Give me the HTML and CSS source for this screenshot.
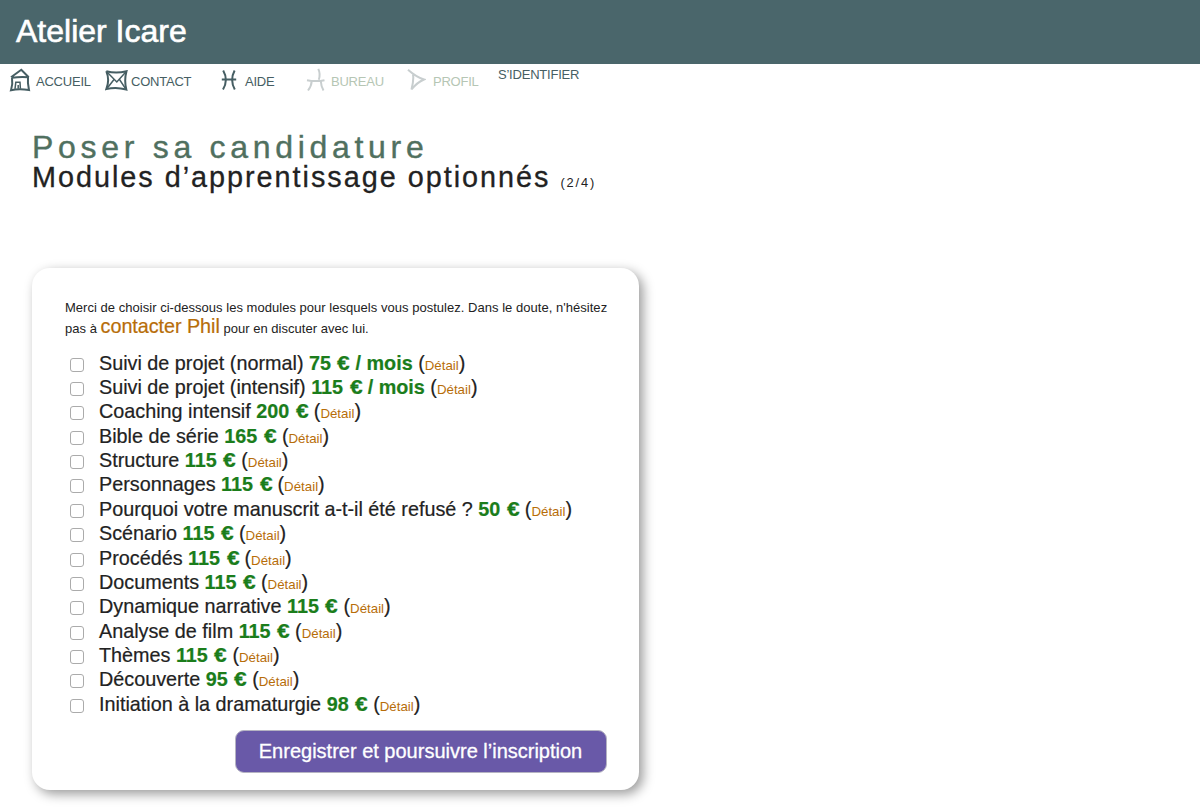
FILE: index.html
```html
<!DOCTYPE html>
<html lang="fr">
<head>
<meta charset="utf-8">
<title>Atelier Icare</title>
<link rel="stylesheet" href="styles.css">
</head>
<body>
<header class="banner">Atelier Icare</header>
<nav class="nav">
  <a class="home"><svg width="22" height="24" viewBox="0 0 22 24"><path d="M2 9.3 12.3 1.7 19.7 9.3M3 9.8Q11 8.7 19 9.3Q18.4 15 20 22Q10 20.3 2 22.2Q4 16 3 9.8"/><path class="thin" d="M6 20.8 6.8 14.3H11L11.4 20.8M9.2 17V20.8"/></svg><span>ACCUEIL</span></a>
  <a class="contact"><svg width="23" height="22" viewBox="0 0 23 22"><path d="M1.3 1.2Q11 4 21.5 1.2Q19 10 21.3 19.5Q11 16.5 1.3 19.1Q5 10 1.3 1.2"/><path class="thin" d="M2 2 11.8 12 20.8 2M2 18.5 9 9.5M20.5 18.7 14.5 9.5"/></svg><span>CONTACT</span></a>
  <a class="help"><svg width="18" height="22" viewBox="0 0 18 22"><path d="M3.2 .5Q8.6 10 3 19.6M14.6 .5Q9.6 10 14.8 19.6M1.8 9.6H16.2"/></svg><span>AIDE</span></a>
  <a class="desk off"><svg width="20" height="24" viewBox="0 0 20 24"><path d="M12.3.8Q14.7 6 12.8 11.7M1 12.2Q10 14 18.5 12.2M5.7 13Q5.5 18 2 22.5M14.8 13Q15 18 17.5 22.5"/></svg><span>BUREAU</span></a>
  <a class="profile off"><svg width="19" height="24" viewBox="0 0 19 24"><path d="M1 1.8Q9.5 9.3 17 11.5Q10 14.4 4.5 21.5Q7 11.5 6 6.5"/></svg><span>PROFIL</span></a>
  <a class="login">S’IDENTIFIER</a>
</nav>
<main>
  <h1>Poser sa candidature</h1>
  <h2>Modules d’apprentissage optionnés <small>(2/4)</small></h2>
  <form class="card">
    <p class="intro">Merci de choisir ci-dessous les modules pour lesquels vous postulez. Dans le doute, n'hésitez<br>pas à <a>contacter Phil</a> pour en discuter avec lui.</p>
    <div class="modules">
      <label><input type="checkbox"><span>Suivi de projet (normal) <b>75 <i>€</i> / mois</b> (<a>Détail</a>)</span></label>
      <label><input type="checkbox"><span>Suivi de projet (intensif) <b>115 <i>€</i> / mois</b> (<a>Détail</a>)</span></label>
      <label><input type="checkbox"><span>Coaching intensif <b>200 <i>€</i></b> (<a>Détail</a>)</span></label>
      <label><input type="checkbox"><span>Bible de série <b>165 <i>€</i></b> (<a>Détail</a>)</span></label>
      <label><input type="checkbox"><span>Structure <b>115 <i>€</i></b> (<a>Détail</a>)</span></label>
      <label><input type="checkbox"><span>Personnages <b>115 <i>€</i></b> (<a>Détail</a>)</span></label>
      <label><input type="checkbox"><span>Pourquoi votre manuscrit a-t-il été refusé ? <b>50 <i>€</i></b> (<a>Détail</a>)</span></label>
      <label><input type="checkbox"><span>Scénario <b>115 <i>€</i></b> (<a>Détail</a>)</span></label>
      <label><input type="checkbox"><span>Procédés <b>115 <i>€</i></b> (<a>Détail</a>)</span></label>
      <label><input type="checkbox"><span>Documents <b>115 <i>€</i></b> (<a>Détail</a>)</span></label>
      <label><input type="checkbox"><span>Dynamique narrative <b>115 <i>€</i></b> (<a>Détail</a>)</span></label>
      <label><input type="checkbox"><span>Analyse de film <b>115 <i>€</i></b> (<a>Détail</a>)</span></label>
      <label><input type="checkbox"><span>Thèmes <b>115 <i>€</i></b> (<a>Détail</a>)</span></label>
      <label><input type="checkbox"><span>Découverte <b>95 <i>€</i></b> (<a>Détail</a>)</span></label>
      <label><input type="checkbox"><span>Initiation à la dramaturgie <b>98 <i>€</i></b> (<a>Détail</a>)</span></label>
    </div>
    <button type="button">Enregistrer et poursuivre l’inscription</button>
  </form>
</main>
</body>
</html>
```
FILE: styles.css
```css
* { box-sizing: border-box; }
body {
  margin: 0;
  height: 811px;
  overflow: hidden;
  background: #fff;
  color: #222;
  font-family: "Liberation Sans", Arial, sans-serif;
}
.banner {
  height: 64px;
  padding-left: 16px;
  background: #4a666b;
  color: #fff;
  font-size: 32px;
  line-height: 63px;
  -webkit-text-stroke: .6px #fff;
}
.nav {
  display: flex;
  align-items: flex-start;
  height: 67px;
  padding: 4px 0 0 9px;
  color: #465e63;
  font-size: 13px;
  letter-spacing: -.22px;
  line-height: 14px;
}
.nav a { display: flex; align-items: flex-start; white-space: nowrap; }
.nav span { margin-top: 7px; }
.nav svg { flex: none; fill: none; stroke: #465e63; stroke-width: 2; }
.nav svg .thin { stroke-width: 1.5; }
.nav .off { color: #b6c6b4; }
.nav .off svg { stroke: #c8cecf; }
.home { width: 96px; gap: 5px; }
.contact { width: 115px; gap: 3px; }
.contact svg, .help svg { margin-top: 2px; }
.help { width: 86px; gap: 7px; }
.desk { width: 101px; gap: 5px; }
.profile { width: 91px; gap: 7px; }
h1, h2 { margin: 0 0 0 32px; font-weight: 400; white-space: nowrap; }
h1 {
  height: 32px;
  color: #50705f;
  font-size: 32px;
  line-height: 32px;
  letter-spacing: 4.7px;
  -webkit-text-stroke: .4px #50705f;
}
h2 {
  height: 27px;
  font-size: 28.8px;
  line-height: 29px;
  letter-spacing: 1.98px;
  -webkit-text-stroke: .3px #222;
}
h2 small { font-size: 12.8px; letter-spacing: 1.9px; -webkit-text-stroke: 0; }
.card {
  display: flex;
  flex-direction: column;
  width: 607px;
  height: 522px;
  margin: 78px 0 0 32px;
  padding: 29px 32.5px 0 33px;
  border-radius: 18px;
  background: #fff;
  box-shadow: 4px 4px 12px rgba(0, 0, 0, .4);
}
.intro { margin: 0 0 13px; font-size: 13px; letter-spacing: .03px; line-height: 21px; white-space: nowrap; }
.intro a { font-size: 19.8px; letter-spacing: -.05px; line-height: 15px; -webkit-text-stroke: .2px; }
.card a { color: #b76d08; }
.modules { display: flex; flex-direction: column; }
.modules label {
  display: flex;
  align-items: center;
  height: 24.36px;
  padding-left: 5px;
  font-size: 19.8px;
  line-height: 24px;
  white-space: nowrap;
  -webkit-text-stroke: .2px;
}
.modules b { color: #1b7d1b; }
.modules i {
  display: inline-block;
  margin: 0 1.5px 0 1px;
  font-style: normal;
  transform: scaleX(1.15);
  transform-origin: left;
}
.modules label a { font-size: 13.3px; -webkit-text-stroke: 0; }
.modules input {
  appearance: none;
  width: 14px;
  height: 14px;
  margin: 1px 15px 0 0;
  border: 1px solid #ababab;
  border-radius: 3px;
  background: #fff;
}
button {
  align-self: flex-end;
  width: 372px;
  height: 43px;
  margin: 13px 0 0;
  padding: 0;
  border: 1px solid #b5b3c2;
  border-radius: 9px;
  background: #6959a8;
  color: #fff;
  font: 20px/41px "Liberation Sans", Arial, sans-serif;
  -webkit-text-stroke: .3px #fff;
}
```
